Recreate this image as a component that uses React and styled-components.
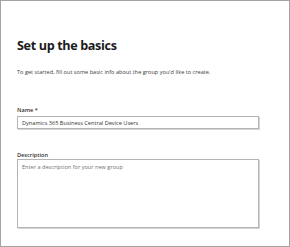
import styled, { createGlobalStyle } from 'styled-components';

const Global = createGlobalStyle`
  html, body {
    margin: 0;
    padding: 0;
    background: #fff;
  }
  body {
    font-family: 'Open Sans', 'Noto Sans', sans-serif;
  }
`;

const Panel = styled.div`
  box-sizing: border-box;
  width: 290px;
  height: 247px;
  border: 1px solid #a3a3a3;
  padding: 37px 30px 0 16px;
  display: flex;
  flex-direction: column;
  background: #fff;
`;

const Title = styled.h1`
  margin: 0;
  font-size: 12.6px;
  line-height: 16px;
  font-weight: 700;
  color: #1b1b1b;
  letter-spacing: -0.35px;
`;

const Intro = styled.p`
  margin: 14px 0 0;
  font-size: 5.6px;
  line-height: 8px;
  color: #3b3b3b;
`;

const Label = styled.label`
  display: block;
  margin-top: ${(p) => p.$gap}px;
  font-size: 5.6px;
  line-height: 8px;
  font-weight: 600;
  color: #323130;
`;

const Field = styled.div`
  box-sizing: border-box;
  margin-top: ${(p) => p.$gap}px;
  width: 242px;
  height: ${(p) => p.$height}px;
  border: 1px solid #b4b4b4;
  box-shadow: 1px 1px 0 #d4d4d4;
  padding: ${(p) => (p.$multi ? '3px 4px' : '0 4px')};
  display: flex;
  align-items: ${(p) => (p.$multi ? 'flex-start' : 'center')};
  font-size: 5.6px;
  line-height: 8px;
  color: ${(p) => (p.$placeholder ? '#707070' : '#323130')};
`;

export default function App() {
  return (
    <>
      <Global />
      <Panel>
        <Title>Set up the basics</Title>
        <Intro>To get started, fill out some basic info about the group you'd like to create.</Intro>
        <Label $gap={30}>Name *</Label>
        <Field $gap={2} $height={13}>Dynamics 365 Business Central Device Users</Field>
        <Label $gap={22}>Description</Label>
        <Field $gap={0} $height={69} $multi $placeholder>
          Enter a description for your new group
        </Field>
      </Panel>
    </>
  );
}
